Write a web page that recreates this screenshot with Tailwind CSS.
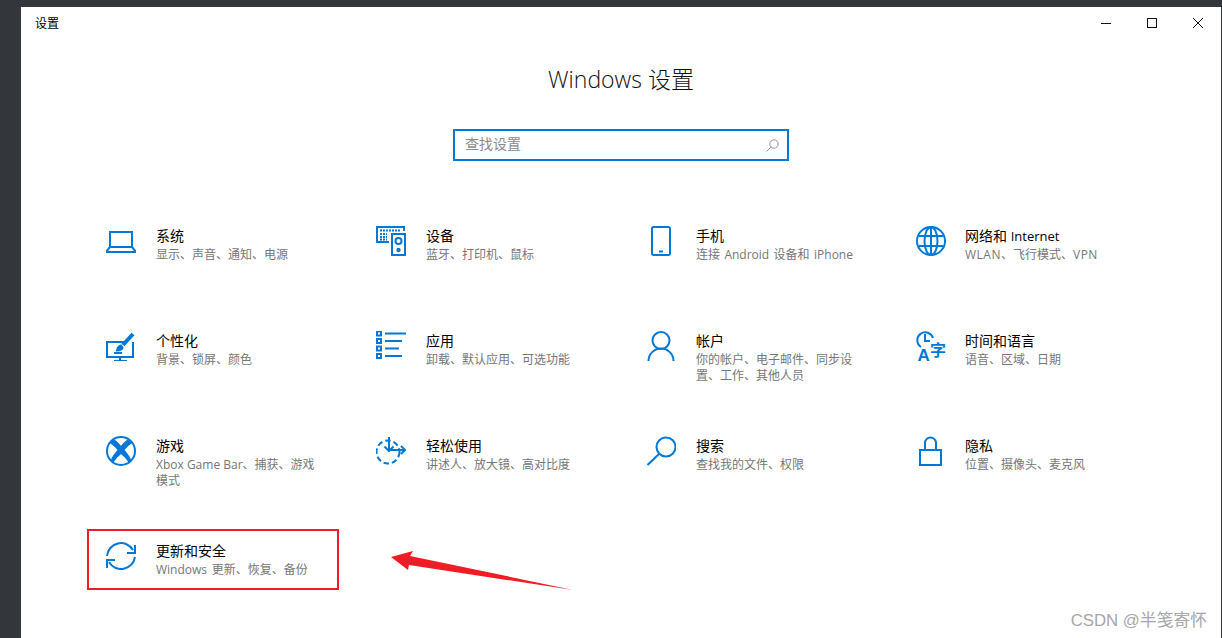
<!DOCTYPE html>
<html lang="zh-CN">
<head>
    <meta charset="UTF-8">
    <title>设置</title>
    <script src="https://cdn.jsdelivr.net/npm/@tailwindcss/browser@4"></script>
</head>
<body class="bg-[#33373b] h-[638px] overflow-hidden pl-[21px] pt-[7px] pr-px font-['Open_Sans','Noto_Sans_CJK_SC',sans-serif]">
    <div class="relative bg-white h-[631px]">
        <!-- title bar -->
        <div class="flex items-center justify-between h-8">
            <span class="pl-[14px] pt-0.5 text-xs text-black">设置</span>
            <div class="flex">
                <div class="w-[46px] h-8 flex items-center justify-center">
                    <svg width="10" height="10" viewBox="0 0 10 10" class="stroke-[#111]" fill="none"><path d="M0 5.5h10"/></svg>
                </div>
                <div class="w-[46px] h-8 flex items-center justify-center">
                    <svg width="10" height="10" viewBox="0 0 10 10" class="stroke-[#111]" fill="none"><rect x=".5" y=".5" width="9" height="9"/></svg>
                </div>
                <div class="w-[46px] h-8 flex items-center justify-center">
                    <svg width="10" height="10" viewBox="0 0 10 10" class="stroke-[#111]" fill="none"><path d="M0 0l10 10M10 0L0 10"/></svg>
                </div>
            </div>
        </div>

        <h1 class="mt-5 text-center text-[23px] font-light leading-10 text-[#111]">Windows 设置</h1>

        <div class="mt-[30px] mx-auto w-[336px] h-8 border-2 border-[#0078d7] flex items-center justify-between pl-2.5 pr-2">
            <span class="text-sm text-[#8a8a8a] pb-0.5">查找设置</span>
            <svg width="13" height="13" viewBox="0 0 13 13" fill="none" class="stroke-[#999]"><circle cx="8" cy="5" r="4.2"/><path d="M5 8l-4.500 4.500"/></svg>
        </div>

        <!-- settings grid -->
        <div class="mt-[65px] pl-[67px] grid grid-cols-[270px_270px_270px_270px] auto-rows-[105px]">
            <div class="flex gap-5 pl-[18px]">
                <svg width="30" height="30" viewBox="0 0 30 30" fill="none" class="stroke-[#0078d7] stroke-2 shrink-0"><path d="M4 21V6h22v15M4 21L1 24.5V26h28v-1.500L26 21z"/></svg>
                <div class="w-[165px]">
                    <div class="text-sm leading-5 text-black">系统</div>
                    <div class="mt-px text-xs leading-4 text-[#767676]">显示、声音、通知、电源</div>
                </div>
            </div>
            <div class="flex gap-5 pl-[18px]">
                <svg width="30" height="30" viewBox="0 0 30 30" fill="none" class="stroke-[#0078d7] stroke-2 shrink-0"><path d="M13 16H1V1h27v4"/><path d="M4 4.500h21M4 8h7M4 11h7M4 13.500h7" stroke-dasharray="2 1"/><rect x="16" y="8" width="13" height="21"/><circle cx="22.500" cy="15" r="3"/><circle cx="22.500" cy="24" r="1.200"/></svg>
                <div class="w-[165px]">
                    <div class="text-sm leading-5 text-black">设备</div>
                    <div class="mt-px text-xs leading-4 text-[#767676]">蓝牙、打印机、鼠标</div>
                </div>
            </div>
            <div class="flex gap-5 pl-[18px]">
                <svg width="30" height="30" viewBox="0 0 30 30" fill="none" class="stroke-[#0078d7] stroke-2 shrink-0"><rect x="6" y="1" width="18" height="28" rx="1.500"/><path d="M13 25.500h4"/></svg>
                <div class="w-[165px]">
                    <div class="text-sm leading-5 text-black">手机</div>
                    <div class="mt-px text-xs leading-4 text-[#767676] [word-spacing:1.300px]">连接 Android 设备和 iPhone</div>
                </div>
            </div>
            <div class="flex gap-5 pl-[18px]">
                <svg width="30" height="30" viewBox="0 0 30 30" fill="none" class="stroke-[#0078d7] stroke-2 shrink-0"><circle cx="15" cy="15" r="14"/><ellipse cx="15" cy="15" rx="6.500" ry="14"/><path d="M15 1v28M3 10h24M3 20h24"/></svg>
                <div class="w-[165px] -ml-px">
                    <div class="text-sm leading-5 text-black">网络和 <span class="text-[13px]">Internet</span></div>
                    <div class="mt-px text-xs leading-4 text-[#767676]"><span class="tracking-[0.5px]">WLAN</span>、飞行模式、<span class="tracking-[0.5px]">VPN</span></div>
                </div>
            </div>

            <div class="flex gap-5 pl-[18px]">
                <svg width="30" height="30" viewBox="0 0 30 30" fill="none" class="stroke-[#0078d7] stroke-2 shrink-0"><path d="M19 11H1v15h26V11M14 26v4M8 30h13"/><path d="M8 22h8"/><path d="M27 3L17 14" class="stroke-[4]"/><path d="M15 14.500c-3 .5-3.500 3-4 5 2 0 5-.5 5.500-3z" class="fill-[#0078d7]"/></svg>
                <div class="w-[165px]">
                    <div class="text-sm leading-5 text-black">个性化</div>
                    <div class="mt-px text-xs leading-4 text-[#767676]">背景、锁屏、颜色</div>
                </div>
            </div>
            <div class="flex gap-5 pl-[18px]">
                <svg width="30" height="30" viewBox="0 0 30 30" fill="none" class="stroke-[#0078d7] stroke-2 shrink-0"><path d="M9 2.500h21M9 10h17M9 17.500h14M9 25h17"/><rect x="1" y="0.500" width="4" height="4"/><rect x="1" y="8" width="4" height="4"/><rect x="1" y="15.500" width="4" height="4"/><rect x="1" y="23" width="4" height="4"/></svg>
                <div class="w-[165px]">
                    <div class="text-sm leading-5 text-black">应用</div>
                    <div class="mt-px text-xs leading-4 text-[#767676]">卸载、默认应用、可选功能</div>
                </div>
            </div>
            <div class="flex gap-5 pl-[18px]">
                <svg width="30" height="30" viewBox="0 0 30 30" fill="none" class="stroke-[#0078d7] stroke-2 shrink-0"><circle cx="15" cy="9.500" r="8.500"/><path d="M2.500 30a12.500 12.500 0 0 1 25 0"/></svg>
                <div class="w-[165px]">
                    <div class="text-sm leading-5 text-black">帐户</div>
                    <div class="mt-px text-xs leading-4 text-[#767676]">你的帐户、电子邮件、同步设置、工作、其他人员</div>
                </div>
            </div>
            <div class="flex gap-5 pl-[18px]">
                <svg width="30" height="30" viewBox="0 0 30 30" fill="none" class="stroke-[#0078d7] stroke-2 shrink-0 overflow-visible"><path d="M5 16a8 8 0 1 1 12-9"/><path d="M9 3v7h5"/><text x="1.500" y="30" stroke="none" class="fill-[#0078d7] text-[17px] font-bold font-['Liberation_Sans']">A</text><text x="14" y="25" stroke="none" class="fill-[#0078d7] text-[16px] font-bold">字</text></svg>
                <div class="w-[165px] -ml-px">
                    <div class="text-sm leading-5 text-black">时间和语言</div>
                    <div class="mt-px text-xs leading-4 text-[#767676]">语音、区域、日期</div>
                </div>
            </div>

            <div class="flex gap-5 pl-[18px]">
                <svg width="30" height="30" viewBox="0 0 30 30" fill="none" class="stroke-[#0078d7] stroke-2 shrink-0"><circle cx="15" cy="15" r="14"/><path d="M7 3Q11 4.500 15 10Q19 4.500 23 3L27 6.500Q22 9.500 18.500 14Q24 20 25.500 25L23 27Q20 22 15 18Q10 22 7 27L4.500 25Q6 20 11.500 14Q8 9.500 3 6.500Z" stroke="none" class="fill-[#0078d7]"/></svg>
                <div class="w-[165px]">
                    <div class="text-sm leading-5 text-black">游戏</div>
                    <div class="mt-px text-xs leading-4 text-[#767676]">Xbox Game Bar、捕获、游戏模式</div>
                </div>
            </div>
            <div class="flex gap-5 pl-[18px]">
                <svg width="30" height="30" viewBox="0 0 30 30" fill="none" class="stroke-[#0078d7] stroke-2 shrink-0"><circle cx="12" cy="16" r="11.500" stroke-dasharray="5.500 3"/><path d="M13 1v14M8.500 10.500L13 15l4.500-4.500M13 14h16M25 10l4 4-4 4"/></svg>
                <div class="w-[165px]">
                    <div class="text-sm leading-5 text-black">轻松使用</div>
                    <div class="mt-px text-xs leading-4 text-[#767676]">讲述人、放大镜、高对比度</div>
                </div>
            </div>
            <div class="flex gap-5 pl-[18px]">
                <svg width="30" height="30" viewBox="0 0 30 30" fill="none" class="stroke-[#0078d7] stroke-2 shrink-0"><circle cx="20" cy="11" r="9.500"/><path d="M1.500 29L13 18"/></svg>
                <div class="w-[165px]">
                    <div class="text-sm leading-5 text-black">搜索</div>
                    <div class="mt-px text-xs leading-4 text-[#767676]">查找我的文件、权限</div>
                </div>
            </div>
            <div class="flex gap-5 pl-[18px]">
                <svg width="30" height="30" viewBox="0 0 30 30" fill="none" class="stroke-[#0078d7] stroke-2 shrink-0"><rect x="4" y="14" width="21" height="15"/><path d="M9 14V7a5.500 5.500 0 0 1 11 0v7"/></svg>
                <div class="w-[165px] -ml-px">
                    <div class="text-sm leading-5 text-black">隐私</div>
                    <div class="mt-px text-xs leading-4 text-[#767676]">位置、摄像头、麦克风</div>
                </div>
            </div>

            <div class="flex gap-5 pl-[18px]">
                <svg width="30" height="30" viewBox="0 0 30 30" fill="none" class="stroke-[#0078d7] stroke-2 shrink-0"><path d="M1 15A14 14 0 0 1 27 9"/><path d="M29 4v8h-8"/><path d="M29 16A14 14 0 0 1 3 21"/><path d="M1 27v-8h8"/></svg>
                <div class="w-[165px]">
                    <div class="text-sm leading-5 text-black">更新和安全</div>
                    <div class="mt-px text-xs leading-4 text-[#767676] [word-spacing:1.500px]">Windows 更新、恢复、备份</div>
                </div>
            </div>
        </div>

        <!-- annotation over the screenshot -->
        <div class="absolute left-[66px] top-[522px] w-[252px] h-[61px] border-2 border-[#ee1c25]"></div>
        <svg class="absolute left-[370px] top-[544px]" width="182" height="39" viewBox="0 0 182 39"><polygon points="0,6 22,0 19,5 182,39 18,14 17,19" class="fill-[#ee1c25]"/></svg>
        <span class="absolute right-[14px] top-[601px] text-[16.800px] text-[#a6a6a6] font-['Liberation_Sans','Noto_Sans_CJK_SC',sans-serif]">CSDN @半笺寄怀</span>
    </div>
</body>
</html>
